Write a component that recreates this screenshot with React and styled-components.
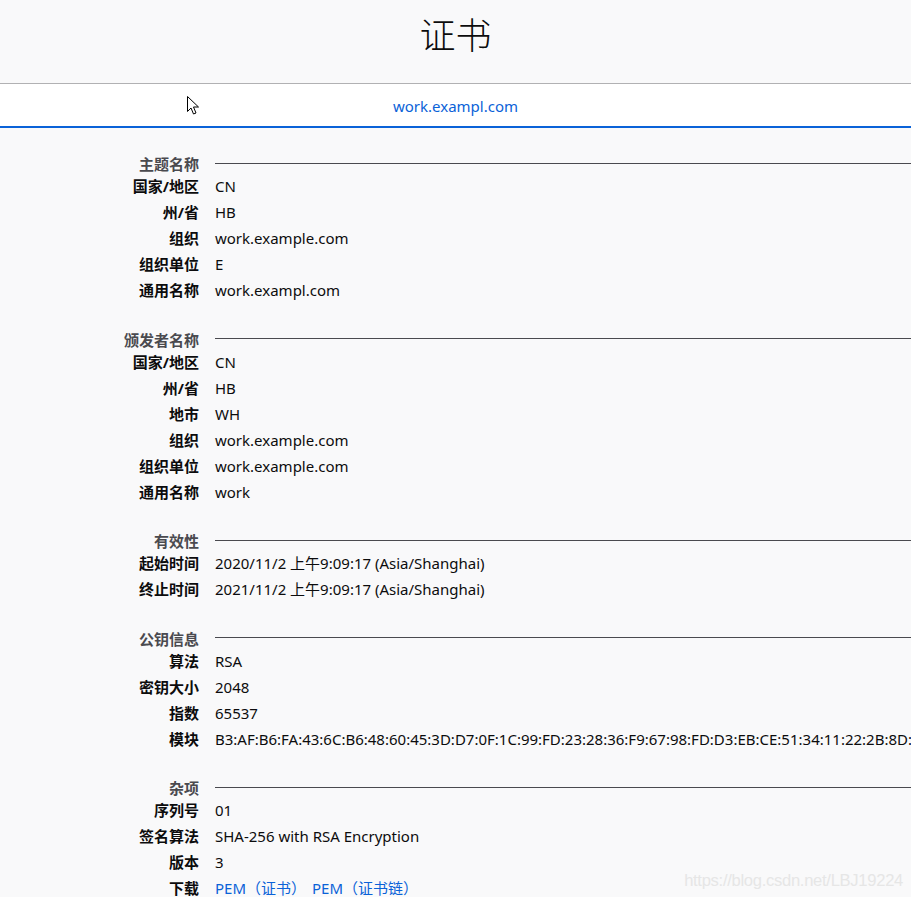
import React from "react";
import styled, { createGlobalStyle } from "styled-components";

const GlobalStyle = createGlobalStyle`
  html, body {
    margin: 0;
    padding: 0;
    background: #f9f9fa;
    overflow: hidden;
  }
  body {
    font-family: "Noto Sans", "Noto Sans CJK SC", sans-serif;
    color: #0c0c0d;
  }
`;

const sections = [
  {
    title: "主题名称",
    rows: [
      ["国家/地区", "CN"],
      ["州/省", "HB"],
      ["组织", "work.example.com"],
      ["组织单位", "E"],
      ["通用名称", "work.exampl.com"],
    ],
  },
  {
    title: "颁发者名称",
    rows: [
      ["国家/地区", "CN"],
      ["州/省", "HB"],
      ["地市", "WH"],
      ["组织", "work.example.com"],
      ["组织单位", "work.example.com"],
      ["通用名称", "work"],
    ],
  },
  {
    title: "有效性",
    rows: [
      ["起始时间", "2020/11/2 上午9:09:17 (Asia/Shanghai)"],
      ["终止时间", "2021/11/2 上午9:09:17 (Asia/Shanghai)"],
    ],
  },
  {
    title: "公钥信息",
    rows: [
      ["算法", "RSA"],
      ["密钥大小", "2048"],
      ["指数", "65537"],
      [
        "模块",
        "B3:AF:B6:FA:43:6C:B6:48:60:45:3D:D7:0F:1C:99:FD:23:28:36:F9:67:98:FD:D3:EB:CE:51:34:11:22:2B:8D:4A:7E:90:C1",
      ],
    ],
  },
];

const Page = styled.div`
  position: relative;
  width: 911px;
  height: 897px;
  overflow: hidden;
`;

const Header = styled.header`
  height: 84px;
  display: flex;
  align-items: center;
  justify-content: center;
  border-bottom: 1px solid #b1b1b3;
  box-sizing: border-box;
`;

const Title = styled.h1`
  margin: 0 0 12px;
  font-size: 36px;
  font-weight: 300;
  line-height: 1;
  color: #0c0c0d;
`;

const TabBar = styled.nav`
  height: 44px;
  background: #fff;
  border-bottom: 2px solid #0a62d8;
  box-sizing: border-box;
  display: flex;
  align-items: center;
  justify-content: center;
`;

const Tab = styled.span`
  font-size: 15px;
  color: #0a62d8;
  padding-top: 2px;
`;

const Content = styled.main`
  padding-top: 27px;
`;

const Section = styled.section`
  margin-bottom: 27.5px;
`;

const Grid = styled.div`
  display: grid;
  grid-template-columns: 199px 1fr;
  column-gap: 16px;
`;

const HeadingLabel = styled.div`
  height: 18px;
  line-height: 18px;
  text-align: right;
  font-size: 15px;
  font-weight: 700;
  color: #4a4a4f;
`;

const HeadingRule = styled.div`
  align-self: center;
  height: 1px;
  background: #4a4a4f;
  margin-top: -2px;
`;

const Label = styled.div`
  height: 26px;
  line-height: 26px;
  text-align: right;
  font-size: 15px;
  font-weight: 700;
  color: #0c0c0d;
  white-space: nowrap;
`;

const Value = styled.div`
  height: 26px;
  line-height: 26px;
  font-size: 15px;
  color: #0c0c0d;
  white-space: nowrap;
`;

const LinkText = styled.a`
  color: #0a62d8;
  text-decoration: none;
  margin-right: 6px;
  cursor: pointer;
`;

const Watermark = styled.div`
  position: absolute;
  right: 8px;
  bottom: 6px;
  font-family: "Liberation Sans", sans-serif;
  font-size: 16.6px;
  color: #e6e6e6;
  letter-spacing: -0.3px;
`;

const Cursor = styled.svg`
  position: absolute;
  left: 187px;
  top: 96px;
`;

const Block = ({ title, rows, children }) => (
  <Section>
    <Grid>
      <HeadingLabel>{title}</HeadingLabel>
      <HeadingRule />
      {rows.map(([k, v], i) => (
        <React.Fragment key={i}>
          <Label>{k}</Label>
          <Value>{v}</Value>
        </React.Fragment>
      ))}
      {children}
    </Grid>
  </Section>
);

export default function App() {
  return (
    <Page>
      <GlobalStyle />
      <Header>
        <Title>证书</Title>
      </Header>
      <TabBar>
        <Tab>work.exampl.com</Tab>
      </TabBar>
      <Content>
        {sections.map((s) => (
          <Block key={s.title} title={s.title} rows={s.rows} />
        ))}
        <Block
          title="杂项"
          rows={[
            ["序列号", "01"],
            ["签名算法", "SHA-256 with RSA Encryption"],
            ["版本", "3"],
          ]}
        >
          <Label>下载</Label>
          <Value>
            <LinkText>PEM（证书）</LinkText>
            <LinkText>PEM（证书链）</LinkText>
          </Value>
        </Block>
      </Content>
      <Watermark>https://blog.csdn.net/LBJ19224</Watermark>
      <Cursor width="13" height="20" viewBox="0 0 13 20">
        <path
          d="M0.5 0.5 L0.5 15.5 L4 12 L6.5 18 L9 17 L6.5 11 L11.5 11 Z"
          fill="#fff"
          stroke="#000"
          strokeWidth="1"
          strokeLinejoin="miter"
        />
      </Cursor>
    </Page>
  );
}
